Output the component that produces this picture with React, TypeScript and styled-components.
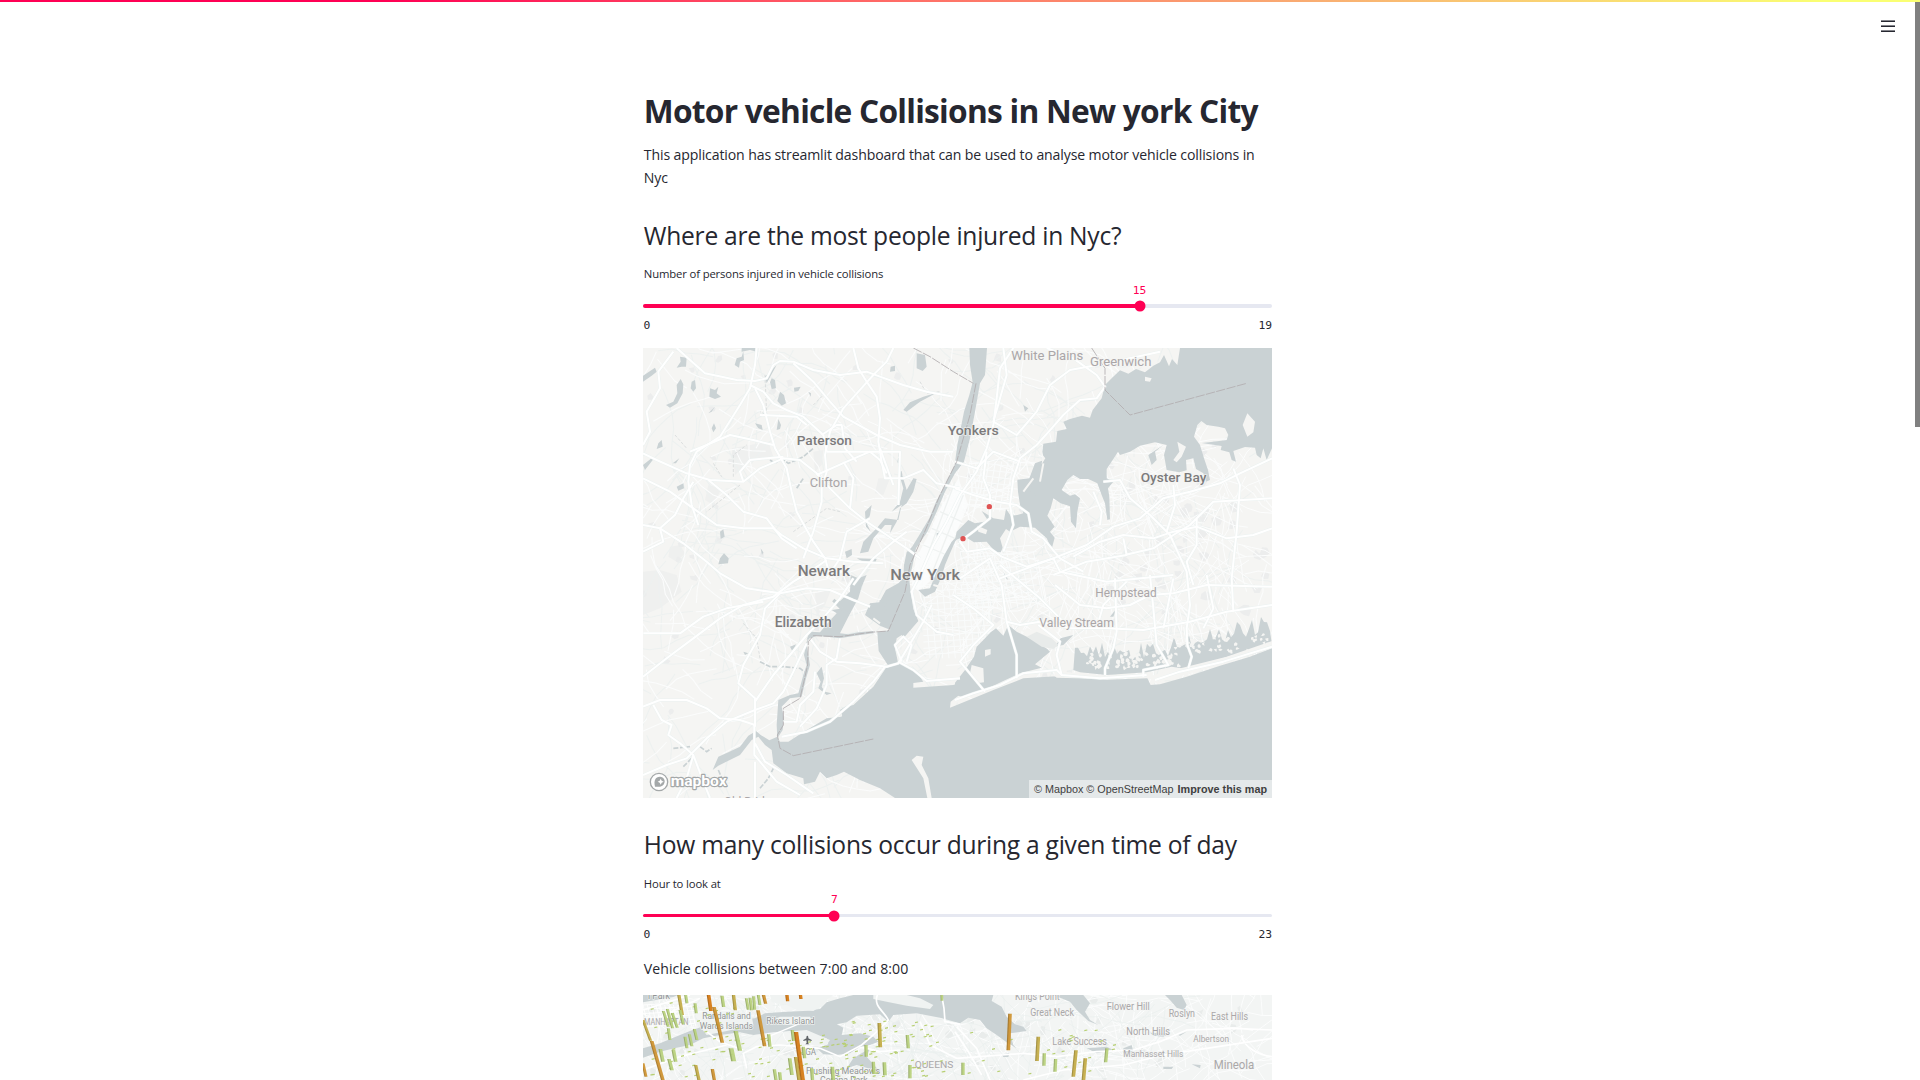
import React from "react";
import styled, { createGlobalStyle } from "styled-components";

const SANS = '"Open Sans", "Noto Sans", sans-serif';
const MONO = '"DejaVu Sans Mono", "Liberation Mono", monospace';
const MAPFONT = 'Roboto, "Open Sans", sans-serif';
const INK = "#262730";
const PINK = "#ff0054";
const LAND = "#f5f5f3";
const WATER = "#cad2d4";
const PARK = "#eceded";

const GlobalStyle = createGlobalStyle`
  html, body { margin: 0; height: 100%; overflow: hidden; background: #fff; }
  body { font-family: ${SANS}; color: ${INK}; }
`;

const Page = styled.div`
  position: relative;
  height: 1080px;
  overflow: hidden;
  display: flex;
  justify-content: center;
`;
const Ribbon = styled.div`
  position: absolute;
  inset: 0 0 auto 0;
  height: 2px;
  background: linear-gradient(to right, ${PINK} 20%, #ff6a66 46%, #f9ac72 68%, #faff73 95%);
`;
const Scrollbar = styled.div`
  position: absolute;
  top: 2px;
  right: 0;
  width: 5px;
  height: 425px;
  background: #808080;
`;
const MenuButton = styled.button`
  position: absolute;
  top: 20px;
  right: 25px;
  width: 14px;
  padding: 0;
  border: 0;
  background: none;
  display: flex;
  flex-direction: column;
  gap: 3px;
  span { height: 2px; background: linear-gradient(#83848a 50%, ${INK} 50%); }
`;
const Column = styled.main`
  width: 629px;
  padding: 91px 5px 0 0;
`;
const Title = styled.h1`
  margin: 0;
  padding-left: 0.8px;
  font-size: 31.7px;
  line-height: 39px;
  font-weight: 700;
  letter-spacing: -0.745px;
  white-space: nowrap;
`;
const Text = styled.p<{ $top: number; $spacing: number }>`
  margin: ${(p) => p.$top}px 0 0;
  padding-left: 0.8px;
  font-size: 14.1px;
  line-height: 23px;
  letter-spacing: ${(p) => p.$spacing}px;
  white-space: nowrap;
`;
const Heading = styled.h2<{ $top: number }>`
  margin: ${(p) => p.$top}px 0 0;
  padding-left: 0.8px;
  font-size: 24.6px;
  line-height: 30px;
  font-weight: 400;
  letter-spacing: -0.26px;
  white-space: nowrap;
`;
const Label = styled.div<{ $top: number }>`
  margin-top: ${(p) => p.$top}px;
  padding-left: 0.8px;
  font-size: 11.3px;
  line-height: 18px;
  letter-spacing: -0.14px;
`;
const SliderBox = styled.div<{ $top: number }>`
  margin-top: ${(p) => p.$top}px;
  font: 11.3px/14px ${MONO};
`;
const ValueRow = styled.div`
  position: relative;
  height: 14px;
  color: ${PINK};
`;
const Value = styled.span`
  position: absolute;
  transform: translateX(-50%);
`;
const Track = styled.div<{ $height: number; $top: number }>`
  position: relative;
  margin: ${(p) => p.$top}px 0 11px;
  height: ${(p) => p.$height}px;
  border-radius: 2px;
  background: #e6e8f1;
`;
const Fill = styled.div`
  height: 100%;
  border-radius: 2px;
  background: ${PINK};
`;
const Thumb = styled.div`
  position: absolute;
  top: 50%;
  width: 11px;
  height: 11px;
  border-radius: 50%;
  background: ${PINK};
  transform: translate(-50%, -50%);
`;
const Ticks = styled.div`
  display: flex;
  justify-content: space-between;
  padding-left: 0.5px;
`;
const MapFrame = styled.div<{ $height: number; $top: number }>`
  position: relative;
  margin-top: ${(p) => p.$top}px;
  height: ${(p) => p.$height}px;
  overflow: hidden;
  background: ${LAND};
  width: 629px;
  svg { display: block; width: 100%; height: 100%; }
`;
const Attribution = styled.div`
  position: absolute;
  right: 0;
  bottom: 0;
  width: 243px;
  height: 18px;
  box-sizing: border-box;
  padding: 0 5px;
  display: flex;
  justify-content: space-between;
  font: 10.8px/18px "Liberation Sans", Arial, sans-serif;
  color: #404040;
  background: rgba(255, 255, 255, 0.5);
  white-space: nowrap;
`;

type SliderProps = { label: string; value: number; max: number; height: number; top: number; gap: number; trackTop: number };

function Slider({ label, value, max, height, top, gap, trackTop }: SliderProps) {
  const pos = `${(value / max) * 100}%`;
  return (
    <>
      <Label $top={top}>{label}</Label>
      <SliderBox $top={gap}>
        <ValueRow><Value style={{ left: pos }}>{value}</Value></ValueRow>
        <Track $height={height} $top={trackTop}>
          <Fill style={{ width: pos }} />
          <Thumb style={{ left: pos }} />
        </Track>
        <Ticks><span>0</span><span>{max}</span></Ticks>
      </SliderBox>
    </>
  );
}

function random(seed: number) {
  let s = seed;
  return () => {
    s = (s * 1664525 + 1013904223) % 4294967296;
    return s / 4294967296;
  };
}

// Winding streets that fill the gaps between the main roads
function streets(seed: number, count: number, x0: number, y0: number, w: number, h: number) {
  const r = random(seed);
  let d = "";
  for (let i = 0; i < count; i++) {
    let x = x0 + r() * w;
    let y = y0 + r() * h;
    let a = r() * Math.PI * 2;
    d += `M${x.toFixed(0)} ${y.toFixed(0)}`;
    const n = 3 + Math.floor(r() * 5);
    for (let k = 0; k < n; k++) {
      a += (r() - 0.5) * 0.8;
      x += Math.cos(a) * 42;
      y += Math.sin(a) * 42;
      d += `L${x.toFixed(0)} ${y.toFixed(0)}`;
    }
  }
  return d;
}

function blobs(seed: number, count: number, x0: number, y0: number, w: number, h: number, size: number) {
  const r = random(seed);
  let d = "";
  for (let i = 0; i < count; i++) {
    const x = x0 + r() * w;
    const y = y0 + r() * h;
    for (let k = 0; k < 7; k++) {
      const a = (k / 7) * Math.PI * 2;
      const q = size * (0.35 + r() * 0.75);
      d += `${k ? "L" : "M"}${(x + Math.cos(a) * q).toFixed(0)} ${(y + Math.sin(a) * q).toFixed(0)}`;
    }
    d += "Z";
  }
  return d;
}

function grid(x0: number, y0: number, w: number, h: number, step: number, slant: number) {
  let d = "";
  for (let x = x0; x <= x0 + w; x += step) d += `M${x} ${y0}l${slant} ${h}`;
  for (let y = y0; y <= y0 + h; y += step) d += `M${x0} ${y}l${w} ${-slant * 0.6}`;
  return d;
}

const sound =
  "M1620 9L1612 60 1596 42 1587 64 1572 30 1560 52 1540 62 1515 82 1488 72 1465 86 1440 76 1415 100 1395 120 1385 160 1358 195 1350 218 1326 212 1290 222 1270 230 1280 252 1252 258 1248 290 1210 296 1207 320 1212 345 1185 355 1168 400 1150 402 1132 404 1134 440 1140 480 1150 505 1132 510 1112 512 1098 492 1092 525 1060 520 1025 498 1045 528 1005 535 985 525 950 560 945 585 975 575 1002 592 1040 590 1065 620 1082 622 1088 608 1080 580 1098 552 1110 560 1140 545 1185 548 1220 580 1235 612 1244 578 1230 560 1244 545 1222 512 1232 490 1240 460 1262 475 1290 484 1293 530 1308 550 1312 500 1320 460 1305 448 1290 452 1265 435 1282 405 1300 390 1320 402 1345 402 1372 415 1385 450 1395 475 1402 525 1410 523 1408 455 1404 430 1420 410 1400 400 1400 372 1420 342 1434 320 1440 330 1470 320 1500 302 1545 292 1580 300 1572 330 1580 375 1618 382 1640 376 1638 345 1660 340 1668 372 1690 385 1698 410 1710 405 1704 375 1692 340 1680 300 1662 275 1672 240 1684 228 1700 240 1735 245 1755 250 1765 270 1760 285 1720 290 1685 294 1745 303 1742 315 1768 322 1775 345 1788 350 1780 318 1815 306 1845 308 1850 330 1862 340 1870 310 1880 345 1896 310V9Z";

const hudson =
  "M988 9L990 60 998 112 988 150 972 200 960 260 952 300 944 360 915 420 888 470 868 520 838 570 816 606 800 622 792 660 790 700 775 715 738 735 718 772 690 775 675 810 720 842 752 855 712 862 716 918 745 962 775 958 765 910 770 880 785 870 790 880 820 845 835 828 820 792 812 740 808 705 822 640 828 610 862 560 890 500 915 440 945 385 972 350 990 280 1005 200 1020 115 1035 90 1041 9Z";

const bay =
  "M745 958L700 1025 640 1080 615 1085 605 1115 560 1120 500 1155 445 1190 420 1190 412 1175 388 1186 362 1170 348 1158 325 1172 300 1205 265 1222 235 1235 218 1275 235 1262 300 1230 335 1185 355 1175 375 1200 395 1215 400 1255 440 1285 490 1300 492 1318 525 1310 540 1280 560 1300 590 1290 612 1280 660 1305 720 1330 765 1359H1896V910L1830 935 1740 962 1640 995 1560 1018 1532 1020 1522 1000 1400 1004 1250 994 1150 1000 1060 1035 1000 1060 945 1082 930 1088 932 1070 955 1052V1015L940 1020 820 1028 820 1014 850 1010 835 988 800 962 775 950Z";

const jamaica =
  "M945 1013L975 975 1002 935 1010 905 1035 880 1052 862 1068 850 1090 872 1105 840 1130 860 1180 885 1222 912 1230 920 1185 958 1205 968 1140 985 1090 1008 1040 1032 1000 1048 965 1055 945 1050ZM1240 885L1300 870 1270 900 1240 905Z";

// Ragged salt-marsh shoreline along the south shore
function marsh() {
  const r = random(77);
  let d = "M1300 975";
  for (let x = 1305; x <= 1896; x += 9) {
    const base = x < 1520 ? 922 : 922 - ((x - 1520) / 376) * 92;
    d += `L${x} ${(base + (r() - 0.5) * 58).toFixed(0)}`;
  }
  return d + "L1896 900 1780 930 1640 972 1595 965 1520 982 1400 990 1320 982Z";
}

const lakes =
  "M9 110V92L45 68 50 80 35 92ZM120 35L140 38 138 65 125 65 110 68 122 50ZM78 180L100 170 112 145 110 120 122 102 130 118 128 145 112 175 90 188ZM155 110L165 105 168 130 160 140 152 130ZM210 130L225 135 235 125 230 145 243 155 225 162 208 155ZM290 40L305 35 310 20 312 45 300 50 297 68 284 60ZM305 9H350V20L330 15 305 20ZM395 100L405 105 408 130 395 132 390 112ZM420 140L432 150 438 175 425 182 412 168ZM462 128L482 125 475 138 463 140ZM415 222L423 240 420 252 410 255ZM345 235L365 240 368 255 355 250ZM215 250L222 235 228 250 220 262ZM830 25L855 30 860 65 848 78 830 70ZM752 65L765 62 765 78 750 80ZM55 295L65 285 68 305 50 312ZM9 360L40 335 38 345 15 375ZM110 425L130 415 132 430 115 437ZM98 355L118 340 108 355ZM240 560L250 553 254 575 242 582ZM240 640L252 625 266 640 264 655 235 658ZM362 610L370 622 366 630ZM615 620L635 612 636 630 620 640ZM790 195L810 172 850 155 890 143 840 170 800 200ZM505 140L513 145 512 155ZM375 95L410 60 380 115ZM890 565L900 562 900 575 890 575ZM205 205L225 185 215 200ZM530 985L545 965 552 1000 545 1025 555 1040 575 1045 560 1050 535 1030 542 1010ZM600 1095L615 1085 625 1100 610 1118ZM450 905L468 898 458 920ZM310 920L325 925 315 930Z";

const newark =
  "M632 690L655 700 680 690 665 725 655 760 625 815 600 865 625 868 655 862 700 858 700 865 640 873 600 880 530 872 500 885 508 860 540 862 560 838 590 805 575 795 610 790 585 765 600 768 630 740Z";

const kill =
  "M510 870L500 900 510 960 498 1000 485 1055 450 1060 425 1085 432 1120 428 1155 412 1180 410 1140 415 1065 450 1050 475 1045 490 990 500 960 492 930 500 890Z";

const meadow =
  "M820 400L830 402 820 440 800 475 780 490 770 530 750 565 755 540 735 540 700 580 685 620 660 625 670 590 710 550 735 520 775 525 785 480 755 500 780 470 790 430 775 380 785 385 800 435ZM675 500L695 480 690 510 680 535 692 560 678 545ZM650 640L710 642 705 655 670 650ZM945 590L930 625 915 660 905 695 885 740 855 755 835 735 870 730 890 680 910 635 935 590 970 555Z";

const minorRivers =
  "M390 345L405 355 425 340 445 355 470 345 490 335 520 310M360 950L390 965 430 965 480 970 500 985M180 1205L200 1220 215 1210M130 1265L155 1240M100 1210L150 1205M235 1275L250 1310M360 1330L385 1300 400 1270M780 320L775 350 785 390M470 430L490 400";

const majorRoads = [
  "M110 9L150 45 195 85 245 95 290 105 345 108 380 100 400 60 420 48 460 50 520 75 600 90 680 80 720 95 790 120 860 140 940 155",
  "M350 9L345 60 330 130 300 180 240 275 170 320 150 360 145 410 155 480 175 540",
  "M330 120L370 140 400 175 440 195 490 215 550 270 560 320",
  "M9 325L50 345 140 385 210 405 310 410 360 370 430 340 480 345 530 385 570 430 630 490 680 530 740 570 800 610 840 640",
  "M345 130L370 180 390 260 405 310 440 370 455 440 470 500 520 590 555 640 570 690",
  "M150 320L200 300 270 270 340 285 400 300",
  "M310 410L300 380 330 345 430 335",
  "M360 210L470 215 500 240",
  "M9 400L90 440 160 490 230 540 310 550 400 550 425 570 490 610 560 640 640 650 730 655",
  "M205 405L260 450 310 500 380 520 425 580 470 610",
  "M9 540L60 550 130 595 200 650 240 685 320 730 420 745 500 730 570 735 640 765 690 785",
  "M60 550L70 590 9 620M60 550L105 510 130 460 160 410",
  "M9 995L80 940 160 880 240 820 310 780 400 755 460 710 510 680 560 645",
  "M10 865L120 865 190 815 260 790 370 770",
  "M345 1145L345 1060 295 1015 310 960 360 870 375 790 420 745",
  "M345 1070L400 990 450 930 500 870 540 830 600 760 640 700",
  "M9 1085L60 1065 140 1065 200 1090 240 1120 300 1125 345 1140",
  "M9 1290L80 1260 140 1240 200 1180 260 1130 345 1095 400 1075 430 1040 460 980 500 895",
  "M40 1080L65 1125 95 1140 85 1170 120 1195 160 1230 190 1310 210 1359M160 1230L140 1300 110 1359",
  "M343 1140L343 1230 360 1250 410 1310 480 1350M345 1195L375 1250 440 1290 520 1345M345 1250V1359",
  "M510 880L540 920 590 950 660 955 740 965 775 955 820 880 850 830 875 780",
  "M600 880L590 940 560 960 560 1020 530 1090 480 1145 M425 1175L500 1160 570 1130 640 1070 700 1010 735 965M430 1130H470L480 1080 520 1040 525 980",
  "M640 9L655 70 680 110 710 155 720 220 715 290 725 350 735 400 790 400 850 375 890 415 960 430",
  "M460 55L520 110 570 170 610 215 710 270 780 300 870 320 940 320",
  "M760 9L740 50 700 90 610 190 570 260 555 330 560 380 545 430 545 470 520 560 490 640",
  "M530 390L620 350 690 320 780 320 775 480",
  "M560 320H690L720 345 740 385M690 520L620 560 600 640 560 700",
  "M545 270L590 240 605 240 615 310 650 350M720 310L760 420M610 350L640 400 630 490",
  "M800 560L760 590 700 640 640 720",
  "M9 300L30 260 20 200 60 130 55 80 100 20",
  "M1120 9L1080 70 1070 160 1060 240 1040 310 1010 380 960 450 920 530 880 600 840 690 815 740 830 810 890 860 940 870",
  "M1220 9L1300 40 1370 90 1395 125 1370 160 1320 165 1270 210 1235 250 1190 300 1140 340 1120 400 1110 480 1120 540 1090 620",
  "M1090 9L1100 90 1060 230 1130 270 1190 200 1230 120 1290 75 1400 55 1560 20",
  "M1040 320L1030 400 1050 450 1050 520 1000 560 960 590 980 620 1050 610 1085 635 1160 665 1240 640 1260 680 1400 710 1600 690",
  "M945 430L1000 450 1070 470 1130 480 1165 505 1175 560 1210 580 1260 640 1330 680",
  "M945 350L1010 370 1060 320 1140 350",
  "M1300 635L1380 590 1450 570 1540 580 1600 560 1670 545 1760 580 1840 570 1896 550",
  "M1080 700L1160 670 1240 640 1340 600 1420 545 1500 520 1570 460 1650 440 1740 415 1800 385 1896 340",
  "M1455 630L1540 610 1600 570 1650 540 1720 470 1896 460M1240 690L1340 650 1460 630 1450 580M1670 520V600L1640 650 1660 720",
  "M1390 410L1440 405 1470 460 1530 510 1590 570 1640 680 1650 780 1640 850 1642 900 1655 935 1645 970",
  "M1600 420L1605 480 1580 560M1780 370L1800 420 1790 560 1775 700 1780 800M1380 540L1385 500 1360 440",
  "M960 700L1050 640 1085 720 1100 830 1140 840 1200 830 1290 850 1400 850 1510 855 1650 830 1760 800 1896 780",
  "M940 750L1000 790 1060 840 1000 900 960 950 985 980 1035 1040M1100 830L1130 930 1130 1000M1195 840L1260 890 1250 930 1265 990",
  "M1425 700L1430 860 1420 910 1395 970V990M1530 690L1540 790 1550 900 1585 960 1510 975 1510 995",
  "M785 950L765 900 790 875 815 900 800 950M775 950L820 975 860 1008 960 1000",
  "M1245 720L1320 780 1400 790 1470 780 1530 750 1600 745 1700 720 1896 725M1080 660L1200 760 1290 850",
  "M945 1065L1000 1045 1080 1020 1150 985 1250 975 1265 990 1380 1000 1520 990M1545 1005L1620 980 1750 950 1896 905",
  "M1700 690L1720 790 1690 850M1600 700L1570 850M1460 710L1390 780 1370 850",
];

const borders =
  "M820 9L870 35 940 80 1000 115M1355 9L1395 70 1395 135 1470 210 1820 115M1008 115L990 210 950 350 900 450 850 570 810 660 795 740 745 858 690 862 600 875 520 872 505 890 503 960 480 1060 430 1090 430 1140 412 1170 420 1210 460 1232 700 1182";

const mainLabels = [
  { t: "Paterson", x: 470, y: 301, w: 166, s: 41, dark: true },
  { t: "Clifton", x: 509, y: 427, w: 113, s: 40, dark: false },
  { t: "Yonkers", x: 923, y: 270, w: 153, s: 41, dark: true },
  { t: "White Plains", x: 1114, y: 46, w: 216, s: 40, dark: false },
  { t: "Greenwich", x: 1350, y: 63, w: 184, s: 40, dark: false },
  { t: "Oyster Bay", x: 1502, y: 412, w: 197, s: 41, dark: true },
  { t: "Newark", x: 473, y: 692, w: 157, s: 42, dark: true },
  { t: "New York", x: 751, y: 705, w: 209, s: 46, dark: true },
  { t: "Elizabeth", x: 404, y: 847, w: 171, s: 42, dark: true },
  { t: "Hempstead", x: 1366, y: 755, w: 184, s: 40, dark: false },
  { t: "Valley Stream", x: 1198, y: 846, w: 224, s: 40, dark: false },
  { t: "Old Bridge", x: 252, y: 1384, w: 160, s: 40, dark: false },
];

function InjuryMap() {
  return (
    <svg viewBox="9 9 1887 1350" preserveAspectRatio="none" fontFamily={MAPFONT}>
      <rect x="9" y="9" width="1887" height="1350" fill={LAND} />
      <path d="M9 680L60 675 110 690 125 740 60 790 9 810ZM275 310L385 290 400 335 330 345 285 390ZM715 400L750 400 730 450 705 445ZM525 745L575 730 555 780 530 815ZM520 320L550 315 545 360 525 380ZM90 605L120 600 135 625 110 650 85 635ZM205 420L245 430 220 480 195 465Z" fill="#eff0ef" />
      <path d={blobs(5, 90, 9, 9, 1887, 1100, 14)} fill={PARK} />
      <path d={blobs(15, 34, 1400, 400, 480, 420, 19)} fill={PARK} />
      <path d={streets(8, 320, 9, 9, 1887, 1350)} fill="none" stroke="#edf1f0" strokeWidth="3.2" strokeLinejoin="round" />
      <path d={streets(21, 320, 9, 9, 1887, 1350)} fill="none" stroke="#fbfcfc" strokeWidth="3.2" strokeLinejoin="round" />
      <path d={streets(31, 200, 900, 300, 900, 600)} fill="none" stroke="#fcfdfd" strokeWidth="3" />
      <g fill="none" stroke="#fafcfc" strokeWidth="3">
        <path d={grid(850, 720, 200, 220, 19, 20)} />
        <path d={grid(960, 620, 230, 170, 20, 34)} />
        <path d={grid(990, 350, 130, 150, 19, -25)} />
      </g>
      <path d="M955 400L985 480 950 560 915 640 880 700 835 740 815 720 828 640 865 570 895 500Z" fill="#fcfdfd" opacity=".85" />
      <path d="M945 410L840 690M970 450L870 700M900 500L965 530M875 550L945 580M850 600L920 630" stroke="#eff2f1" strokeWidth="4" />
      <path d="M520 180L550 150M375 90L380 210 360 200M280 395V330L320 300M105 270L140 310M220 355L245 395M460 560L560 490 600 500M840 110L860 145 900 140M300 420L200 500M310 835L350 880 360 940" stroke="#dcdfdf" strokeWidth="3" fill="none" strokeDasharray="9 5" />
      <g fill={WATER}>
        <path d={sound} />
        <path d={hudson} />
        <path d={bay} />
        <path d={jamaica} />
        <path d={marsh()} />
        <path d={lakes} />
        <path d={newark} />
        <path d={kill} />
        <path d={meadow} />
        <path d="M1132 408L1160 402 1190 455 1175 440ZM1410 815L1430 790 1420 815ZM1525 330L1570 300 1545 320 1550 345 1535 360ZM1090 680L1105 705 1098 700ZM1150 180L1165 190 1155 200Z" />
      </g>
      <path d="M720 772L760 750 730 800 690 800M690 808L735 835M580 765L620 805" stroke={WATER} strokeWidth="10" fill="none" />
      <g fill={LAND}>
        <path d="M1612 290L1638 305 1625 335 1610 352 1600 345 1618 320ZM1822 205L1845 230 1840 262 1822 275 1808 240ZM1012 542L1042 555 1038 568 1015 560ZM1035 915L1052 912 1052 928 1035 935ZM995 960L1030 970 1032 1012 1010 1015 990 985ZM830 1232L850 1235 845 1260 865 1300 875 1359H862L850 1300 815 1245ZM430 1185L470 1165 440 1188ZM1515 95L1535 100 1530 110 1515 108ZM1208 330L1216 340 1205 358ZM1140 855L1240 850 1262 880 1240 912 1200 895 1175 875Z" />
        <path d={blobs(62, 62, 1325, 925, 300, 45, 8)} />
        <path d={blobs(63, 42, 1600, 870, 290, 50, 7)} />
        <path d="M1530 1018L1540 990 1640 965 1760 935 1896 888V908L1790 945 1650 985ZM1240 990L1270 980 1400 992 1525 985 1520 995 1400 1002 1250 998Z" />
      </g>
      <path d="M1160 875L1190 860 1235 880 1255 900 1240 912 1205 905Z" fill="#e8ebea" />
      <path d="M1210 355L1200 410M1180 400L1150 440M880 720L900 725M700 820L720 835" stroke={LAND} strokeWidth="6" fill="none" />
      <path d={minorRivers} fill="none" stroke={WATER} strokeWidth="5" strokeDasharray="15 5" />
      <g fill="none" stroke="#ebf2f1" strokeWidth="8.5" strokeLinejoin="round">
        {majorRoads.map((d, i) => <path key={i} d={d} />)}
      </g>
      <g fill="none" stroke="#fff" strokeWidth="6" strokeLinejoin="round">
        {majorRoads.map((d, i) => <path key={i} d={d} />)}
      </g>
      <path d={borders} fill="none" stroke="#b3aeb0" strokeWidth="2.6" strokeDasharray="28 4" />
      <circle cx="1048" cy="485" r="8" fill="#df5353" />
      <circle cx="969" cy="581" r="8" fill="#df5353" />
      <g stroke="#f5f5f3" strokeWidth="5" strokeOpacity=".75" paintOrder="stroke" strokeLinejoin="round">
        {mainLabels.map((l) => (
          <text key={l.t} x={l.x} y={l.y} textLength={l.w} lengthAdjust="spacingAndGlyphs" fontSize={l.s}
            fontWeight={l.dark ? 500 : 400} fill={l.dark ? "#7c7b7c" : "#aaa6a8"}>{l.t}</text>
        ))}
      </g>
      <circle cx="57" cy="1311" r="26" fill="#fff" stroke="#a4a8a9" strokeWidth="4" />
      <path d="M45 1325C40 1306 47 1294 61 1295C76 1297 78 1314 67 1322C61 1326 52 1326 45 1325Z" fill="#a4a8a9" />
      <path d="M62 1301L65 1307 71 1310 65 1313 62 1319 59 1313 53 1310 59 1307Z" fill="#fff" />
      <text x="92" y="1324" textLength="168" lengthAdjust="spacingAndGlyphs" fontSize="46" fontWeight="700" fill="#fff" stroke="#a4a8a9" strokeWidth="7" paintOrder="stroke" strokeLinejoin="round">mapbox</text>
    </svg>
  );
}

type Bar = [number, number, number, number, string, number];
const G = "#b9d27c";
const O = "#cf9330";
const Y = "#c4ac46";
const D = "#d67a12";
const bars: Bar[] = [
  [115, 20, 127, 90, Y, 10], [137, 30, 141, 55, G, 9], [165, 55, 169, 85, G, 9],
  [70, 78, 85, 125, G, 9], [82, 72, 98, 130, G, 9], [97, 85, 112, 128, G, 9], [120, 75, 130, 118, G, 9],
  [85, 130, 90, 165, G, 9], [135, 155, 141, 190, G, 9], [148, 148, 156, 184, G, 9], [163, 132, 171, 165, G, 9],
  [9, 105, 32, 167, Y, 9], [205, 25, 213, 78, D, 11], [222, 66, 247, 173, O, 11],
  [246, 32, 251, 66, G, 10], [280, 25, 286, 76, Y, 10], [319, 40, 325, 74, G, 9], [330, 38, 335, 76, G, 9],
  [341, 34, 344, 74, G, 9], [355, 30, 360, 60, G, 9], [370, 28, 377, 56, O, 10], [354, 76, 374, 184, O, 11],
  [440, 22, 443, 49, D, 10], [480, 20, 483, 42, D, 10], [386, 148, 390, 185, G, 10],
  [287, 138, 300, 197, G, 13], [273, 190, 281, 229, G, 15], [100, 194, 107, 230, G, 11], [61, 192, 69, 230, G, 11],
  [87, 222, 96, 256, G, 11], [35, 168, 70, 290, O, 11], [9, 235, 18, 275, O, 9], [167, 240, 178, 290, Y, 10],
  [217, 252, 224, 290, O, 10], [403, 253, 409, 290, G, 10], [419, 262, 422, 290, G, 10], [449, 220, 456, 270, G, 11],
  [457, 135, 461, 168, G, 10], [490, 185, 494, 220, G, 10], [467, 216, 478, 290, Y, 11], [468, 141, 489, 290, D, 13],
  [515, 250, 518, 290, G, 10], [577, 245, 580, 290, G, 11], [678, 180, 679, 215, G, 10], [718, 114, 721, 187, Y, 11],
  [700, 230, 702, 267, G, 10], [733, 232, 735, 271, G, 11], [802, 150, 805, 190, G, 10], [810, 240, 810, 280, G, 10],
  [905, 20, 906, 47, G, 8], [969, 233, 969, 270, G, 10], [1110, 86, 1105, 196, O, 11], [1195, 155, 1191, 228, Y, 11],
  [1213, 205, 1212, 242, G, 10], [1247, 222, 1245, 260, G, 10], [1308, 196, 1300, 275, Y, 11],
  [1336, 220, 1330, 290, Y, 11], [1401, 190, 1397, 232, G, 10],
];

const cityLabels = [
  { t: "l Park", x: 24, y: 42, w: 66, s: 32, dark: true },
  { t: "MANHATTAN", x: 12, y: 119, w: 133, s: 27 },
  { t: "Randalls and", x: 187, y: 103, w: 145, s: 29, dark: true },
  { t: "Wards Islands", x: 179, y: 133, w: 160, s: 29, dark: true },
  { t: "Rikers Island", x: 379, y: 117, w: 145, s: 29, dark: true },
  { t: "LGA", x: 483, y: 211, w: 45, s: 29, dark: true },
  { t: "Flushing Meadows", x: 498, y: 267, w: 222, s: 28, dark: true },
  { t: "Corona Park", x: 540, y: 294, w: 143, s: 28, dark: true },
  { t: "QUEENS", x: 824, y: 248, w: 116, s: 28 },
  { t: "Kings Point", x: 1125, y: 45, w: 134, s: 31 },
  { t: "Great Neck", x: 1171, y: 94, w: 131, s: 31 },
  { t: "Flower Hill", x: 1400, y: 76, w: 129, s: 31 },
  { t: "Roslyn", x: 1586, y: 97, w: 79, s: 31 },
  { t: "East Hills", x: 1713, y: 106, w: 111, s: 31 },
  { t: "North Hills", x: 1459, y: 149, w: 131, s: 31 },
  { t: "Albertson", x: 1660, y: 170, w: 107, s: 29 },
  { t: "Lake Success", x: 1237, y: 180, w: 164, s: 31 },
  { t: "Manhasset Hills", x: 1450, y: 216, w: 180, s: 29 },
  { t: "Mineola", x: 1721, y: 253, w: 122, s: 37 },
];

function specks() {
  const r = random(99);
  let d = "";
  for (let i = 0; i < 210; i++) {
    const far = i > 185;
    const x = far ? 980 + r() * 440 : 9 + Math.pow(r(), 0.8) * 900;
    const y = far ? 135 + r() * 140 : x > 520 && x < 900 ? 110 + r() * 170 : 50 + r() * 230;
    if (!far && x > 300 && y < 150 && x < 600) continue;
    d += `M${x.toFixed(0)} ${y.toFixed(0)}l9 -2`;
  }
  return d;
}

function HourMap() {
  return (
    <svg viewBox="9 30 1887 255" preserveAspectRatio="none" fontFamily={MAPFONT}>
      <rect x="9" y="30" width="1887" height="255" fill="#f3f5f4" />
      <path d={blobs(41, 60, 9, 30, 1887, 255, 14)} fill="#e9eceb" />
      <path d={streets(42, 210, 9, 30, 1887, 255)} fill="none" stroke="#fcfdfd" strokeWidth="3" />
      <path d={streets(45, 170, 9, 30, 1500, 255)} fill="none" stroke="#ebf0ef" strokeWidth="2.2" />
      <g fill={WATER}>
        <path d="M9 52L100 36 115 30H9ZM9 190L60 175 120 150 165 132 205 120 260 108 345 100 375 85 440 80 490 78 540 72 560 52 600 40 640 30H1060L1055 48 1085 65 1100 95 1125 118 1150 125 1160 138 1110 145 1120 180 1130 190 1100 172 1070 150 1040 130 1020 105 985 98 960 115 900 98 830 85 760 90 745 110 720 88 650 92 620 112 590 118 610 128 605 150 660 145 700 155 715 170 690 180 660 185 630 205 590 210 550 208 530 190 565 178 560 160 520 150 450 138 400 142 340 150 300 142 240 150 190 160 150 180 110 188 60 200 9 218Z" />
        <path d="M1240 30H1330L1350 55 1335 80 1350 105 1375 120 1345 108 1310 75 1290 50ZM1575 30H1625L1640 60 1632 75 1610 68 1590 45ZM1340 190L1400 185 1420 195 1370 205ZM1450 190L1475 180 1480 200 1450 205ZM1530 143L1590 145 1570 155 1540 152ZM1570 245H1600L1595 252H1570ZM1655 238L1682 240 1680 250ZM1085 208L1108 205 1105 216 1090 216ZM640 220L690 190 680 215 720 260 650 240 620 250ZM1620 152L1640 140 1615 150ZM1400 62L1430 68 1410 72Z" />
      </g>
      <g fill="#f0f3f2">
        <path d="M390 30H580L560 45 550 60 520 78 470 75 440 60 395 52ZM700 30H800L840 40 880 60 870 72 800 62 740 50 700 42ZM170 112L220 85 270 80 335 92 340 120 260 138 200 150ZM385 110L420 95 510 95 520 115 440 120ZM440 140L500 135 570 165 560 180 520 180Z" />
      </g>
      <path d="M385 155L480 115M9 120L180 40" stroke="#fff" strokeWidth="4" />
      <g fill="none" stroke="#fff" strokeWidth="5">
        <path d="M712 30C700 65 730 75 745 105L700 150 665 180 600 215 540 190 480 185 420 180 350 185 310 205 320 250M905 30L912 70 915 110 960 118M945 140L985 200 1025 270M950 125L1010 190 1050 285M200 140L240 170 310 195M840 110L870 180 950 220 1150 205 1250 215 1370 200 1480 195 1560 170 1640 135 1780 130 1896 135M1805 150C1810 190 1860 210 1896 215M9 75L150 30M9 255L120 215 260 180M660 185L720 200 780 195M1150 285L1270 255 1450 240 1570 210 1700 190 1896 160" />
      </g>
      <path d={grid(9, 60, 155, 65, 13, 16)} stroke="#fff" strokeWidth="2.5" fill="none" />
      <g stroke="#f5f6f5" strokeWidth="5" strokeOpacity=".8" paintOrder="stroke" strokeLinejoin="round">
        {cityLabels.map((l) => (
          <text key={l.t} x={l.x} y={l.y} textLength={l.w} lengthAdjust="spacingAndGlyphs" fontSize={l.s}
            fill={l.dark ? "#929596" : "#aaa8a9"}>{l.t}</text>
        ))}
      </g>
      <path d="M502 152C505 152 505 157 505 160L515 165V168L505 166 504 174 508 178H496L500 174 499 166 490 168V165L499 160C499 157 499 152 502 152Z" fill="#606467" />
      <path d={specks()} stroke="#b7cf72" strokeWidth="3.5" fill="none" />
      {bars.map(([x1, y1, x2, y2, c, w], i) => (
        <g key={i} opacity=".93">
          <path d={`M${x1 - w / 2} ${y1}H${x1 + w / 2}L${x2 + w / 2} ${y2}H${x2 - w / 2}Z`} fill={c} />
          <path d={`M${x1 - w / 2} ${y1}h${w * 0.3}L${x2 - w * 0.2} ${y2}h${-w * 0.3}Z`} fill="#000" opacity=".2" />
        </g>
      ))}
    </svg>
  );
}

export default function App() {
  return (
    <Page>
      <GlobalStyle />
      <Column>
        <Title>Motor vehicle Collisions in New york City</Title>
        <Text $top={13} $spacing={-0.125}>
          This application has streamlit dashboard that can be used to analyse motor vehicle collisions in
          <br />
          Nyc
        </Text>
        <Heading $top={32}>Where are the most people injured in Nyc?</Heading>
        <Slider label="Number of persons injured in vehicle collisions" value={15} max={19} height={4} top={14} gap={1} trackTop={6} />
        <MapFrame $height={450} $top={15}>
          <InjuryMap />
          <Attribution>
            <span>© Mapbox © OpenStreetMap</span>
            <b>Improve this map</b>
          </Attribution>
        </MapFrame>
        <Heading $top={32}>How many collisions occur during a given time of day</Heading>
        <Slider label="Hour to look at" value={7} max={23} height={3} top={15} gap={0} trackTop={7} />
        <Text $top={15} $spacing={0.04}>Vehicle collisions between 7:00 and 8:00</Text>
        <MapFrame $height={85} $top={15}>
          <HourMap />
        </MapFrame>
      </Column>
      <Ribbon />
      <Scrollbar />
      <MenuButton aria-label="Menu"><span /><span /><span /></MenuButton>
    </Page>
  );
}
